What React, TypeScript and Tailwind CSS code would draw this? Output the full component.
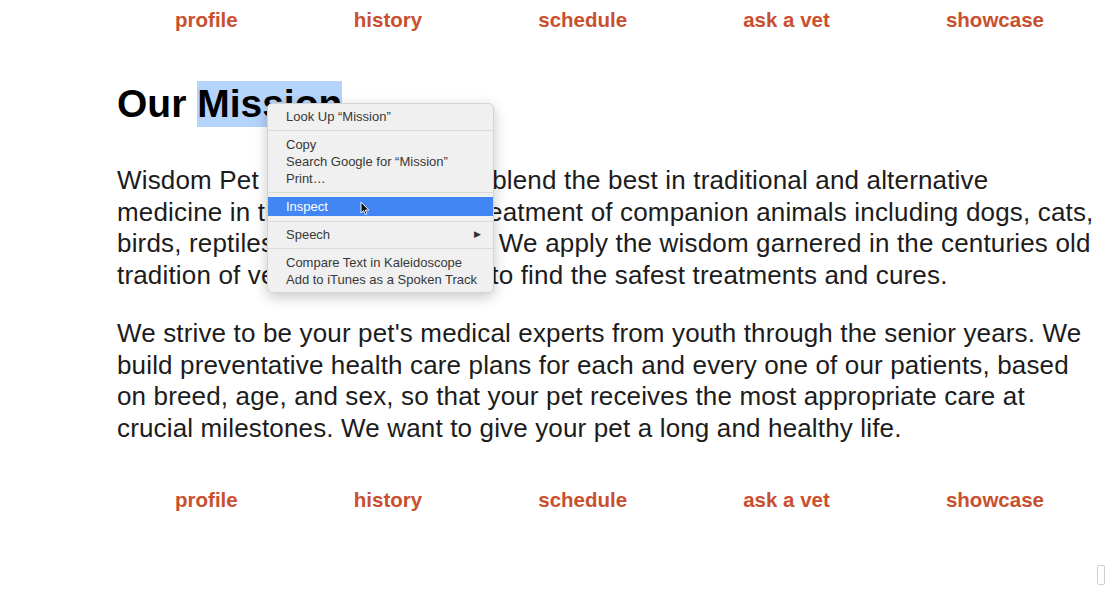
const navLinks = ["profile", "history", "schedule", "ask a vet", "showcase"]

function NavBar() {
  return (
    <nav className="flex h-[40px] items-center justify-around">
      {navLinks.map((link) => (
        <a key={link} href="#" className="text-[20.5px] font-bold text-[#c9502e]">
          {link}
        </a>
      ))}
    </nav>
  )
}

type MenuEntry = { label: string; active?: boolean; submenu?: boolean } | "sep" | "sep-sm"

const menuEntries: MenuEntry[] = [
  { label: "Look Up \u201cMission\u201d" },
  "sep",
  { label: "Copy" },
  { label: "Search Google for \u201cMission\u201d" },
  { label: "Print\u2026" },
  "sep-sm",
  { label: "Inspect", active: true },
  "sep-sm",
  { label: "Speech", submenu: true },
  "sep",
  { label: "Compare Text in Kaleidoscope" },
  { label: "Add to iTunes as a Spoken Track" },
]

function Cursor() {
  return (
    <svg width="10" height="15" viewBox="0 0 10 15" className="absolute left-[92px] top-[4px]">
      <path d="M1 1 L1 12 L3.6 9.6 L5.4 13.6 L7 12.9 L5.3 9 L8.8 9 Z" fill="#111" stroke="#fff" strokeWidth="0.9" />
    </svg>
  )
}

function ContextMenu() {
  return (
    <div className="absolute left-[150px] top-[22px] w-[227px] rounded-[5px] border border-[#d4d4d4] bg-[#f0f0f0] py-[4px] shadow-[0_4px_14px_rgba(0,0,0,0.22)] font-['Liberation_Sans',Arial,sans-serif] text-[13px] text-[#383838]">
      {menuEntries.map((entry, i) =>
        entry === "sep" || entry === "sep-sm" ? (
          <div key={i} className={`flex items-center ${entry === "sep" ? "h-[11px]" : "h-[10px]"}`}>
            <div className="h-px w-full bg-[#dadada]" />
          </div>
        ) : (
          <div
            key={i}
            className={`relative flex items-center pl-[18px] pr-[12px] ${
              entry.active ? "h-[19px] bg-[#4286f4] text-white" : "h-[17px]"
            }`}
          >
            <span className="flex-1">{entry.label}</span>
            {entry.submenu && <span className="text-[9px] text-[#333]">&#9654;</span>}
            {entry.active && <Cursor />}
          </div>
        )
      )}
    </div>
  )
}

export default function App() {
  return (
    <div className="relative min-h-screen bg-white font-['Liberation_Sans',Arial,sans-serif]">
      <div className="ml-[117px] w-[985px]">
        <NavBar />

        <main className="relative">
          <h1 className="mt-[41px] text-[39px] font-bold leading-[46px] text-black">
            Our <span className="inline-block bg-[#b4d4fb]">Mission</span>
          </h1>

          <p className="mt-[38px] whitespace-nowrap text-[26px] leading-[31.5px] tracking-[0.17px] text-[#1c1c1c]">
            Wisdom Pet Medicine strives to blend the best in traditional and alternative
            <br />
            medicine in the diagnosis and treatment of companion animals including dogs, cats,
            <br />
            birds, reptiles, rodents, and fish. We apply the wisdom garnered in the centuries old
            <br />
            tradition of veterinary medicine, to find the safest treatments and cures.
          </p>

          <p className="mt-[27px] whitespace-nowrap text-[26px] leading-[31.5px] tracking-[0.15px] text-[#1c1c1c]">
            We strive to be your pet's medical experts from youth through the senior years. We
            <br />
            build preventative health care plans for each and every one of our patients, based
            <br />
            on breed, age, and sex, so that your pet receives the most appropriate care at
            <br />
            crucial milestones. We want to give your pet a long and healthy life.
          </p>

          <ContextMenu />
        </main>

        <div className="mt-[36px]">
          <NavBar />
        </div>
      </div>

      <div className="absolute left-[1097px] top-[565px] h-[20px] w-[8px] rounded-[2px] border border-[#cfcfcf]" />
    </div>
  )
}
